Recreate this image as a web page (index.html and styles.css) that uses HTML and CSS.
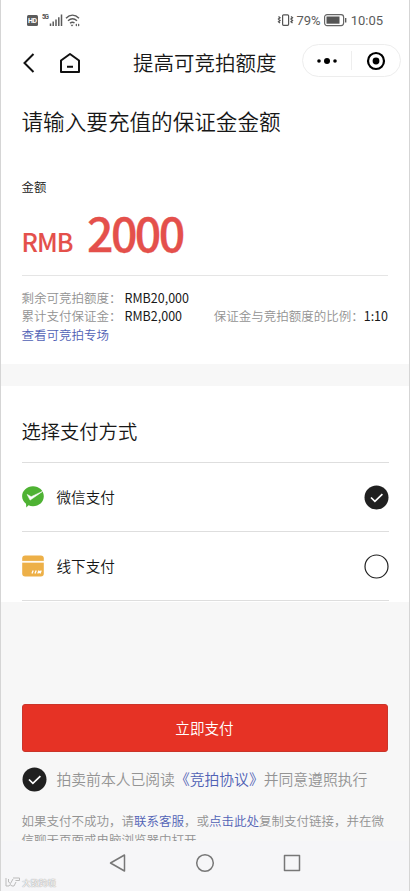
FILE: index.html
```html
<!DOCTYPE html>
<html lang="zh-CN">
<head>
<meta charset="utf-8">
<title>提高可竞拍额度</title>
<link rel="stylesheet" href="styles.css">
</head>
<body>
<div class="phone">
  <header class="status">
    <svg class="status-left" width="56" height="20" viewBox="0 0 56 20">
      <rect x="1" y="5" width="11" height="11" rx="1.5" fill="#5b5b5b"/>
      <text x="2" y="13.2" class="hd" textLength="9">HD</text>
      <text x="16" y="8.8" class="fiveg" textLength="7">5G</text>
      <path d="M24.500 16v-2.500M27.200 16v-4.500M30 16v-6.500M32.800 16V7.200M35.500 16V4.500" stroke="#5b5b5b" stroke-width="1.500"/>
      <g fill="none" stroke="#5b5b5b" stroke-width="1.400"><path d="M40 8.200c4-4 9-4 13 0M42 10.800c3-2.700 6-2.700 9 0M44 13.300c1.700-1.500 3-1.500 4.500-.3"/></g>
      <path d="M44.500 14.800h3l-1.500 1.700zM51 13.500v3l-1.800-1.500zM52 13.500v3l1.800-1.500z" fill="#5b5b5b"/>
    </svg>
    <div class="status-right">
      <svg width="17" height="14" viewBox="0 0 17 14" fill="none" stroke="#555"><rect x="5.600" y="1.800" width="6" height="10.500" rx="1" stroke-width="1.200"/><path d="M1.500 3.500l1.500 1.300-1.500 1.300L3 7.400 1.500 8.700 3 10M14 3.500l1.500 1.300L14 6.100l1.500 1.300L14 8.700l1.500 1.300" stroke-width="1.300"/></svg>
      <span class="percent">79%</span>
      <svg width="25" height="14" viewBox="0 0 25 14"><rect x="1.600" y="1.600" width="19" height="11" rx="2.500" fill="none" stroke="#666" stroke-width="1.200"/><rect x="3.500" y="3.500" width="13" height="7.200" fill="#555"/><path d="M22.700 5v4.500" stroke="#555" stroke-width="1.300"/></svg>
      <span class="clock">10:05</span>
    </div>
  </header>
  <nav class="navbar">
    <svg class="back" width="14" height="22" viewBox="0 0 14 22"><path d="M11.500 2L2.500 11l9 9" fill="none" stroke="#111" stroke-width="2"/></svg>
    <svg class="home" width="22" height="22" viewBox="0 0 22 22"><path d="M2 8.500L11 2l9 6.500V20H2z M8 14.800h6" fill="none" stroke="#111" stroke-width="2" stroke-linejoin="round"/></svg>
    <h1>提高可竞拍额度</h1>
    <div class="capsule">
      <svg width="20" height="8" viewBox="0 0 20 8"><circle cx="2" cy="4" r="1.800"/><circle cx="10" cy="4" r="3"/><circle cx="18" cy="4" r="1.800"/></svg>
      <i></i>
      <svg width="20" height="20" viewBox="0 0 20 20"><circle cx="10" cy="10" r="8" fill="none" stroke="#000" stroke-width="2.200"/><circle cx="10" cy="10" r="3.400"/></svg>
    </div>
  </nav>
  <section class="deposit">
    <h2>请输入要充值的保证金金额</h2>
    <p class="label">金额</p>
    <div class="amount"><span class="currency">RMB</span><span class="number">2000</span></div>
    <div class="details">
      <div><span class="term">剩余可竞拍额度：</span><b>RMB20,000</b></div>
      <div class="pair"><span><span class="term">累计支付保证金：</span><b>RMB2,000</b></span><span>保证金与竞拍额度的比例：<b>1:10</b></span></div>
      <a>查看可竞拍专场</a>
    </div>
  </section>
  <section class="methods">
    <h3>选择支付方式</h3>
    <div class="method">
      <svg width="22" height="22" viewBox="0 0 22 22"><path d="M11 .2c6 0 10.800 4.300 10.800 10S17 20.200 11 20.200c-1.600 0-3.200-.3-4.500-.9L4.300 21.400 4 17.800C1.700 16 .1 13.400.1 10.300.1 4.600 5 .2 11 .2z" fill="#4eb233"/><path d="M5.200 8.500l2.900 5.600L20.500 5.400 9.200 10.700z" fill="#fff" stroke="#fff" stroke-width=".6" stroke-linejoin="round"/></svg>
      <span>微信支付</span>
      <svg class="check" width="25" height="25" viewBox="0 0 25 25"><circle cx="12.500" cy="12.500" r="12" fill="#202020"/><path d="M7 12.500l3.900 3.900 7.500-7.300" fill="none" stroke="#fff" stroke-width="1.700"/></svg>
    </div>
    <div class="method">
      <svg width="22" height="22" viewBox="0 0 22 22"><rect x=".2" y=".5" width="21.600" height="21" rx="3" fill="#edb048"/><path d="M0 6.800h22" stroke="#fffaf0" stroke-width="1.800"/><path d="M10 18.500l1.200-3M13 18.500l1.200-3M15.800 18.500l1.200-3M18 18.500l1.200-3" stroke="#fff" stroke-width="1.300"/><path d="M16 17h3" stroke="#fff" stroke-width="2"/></svg>
      <span>线下支付</span>
      <svg class="check" width="25" height="25" viewBox="0 0 25 25"><circle cx="12.500" cy="12.500" r="11.500" fill="none" stroke="#222" stroke-width="1.200"/></svg>
    </div>
  </section>
  <section class="checkout">
    <button>立即支付</button>
    <div class="agreement">
      <svg width="25" height="25" viewBox="0 0 25 25"><circle cx="12.500" cy="12.500" r="12" fill="#202020"/><path d="M7 12.500l3.900 3.900 7.500-7.300" fill="none" stroke="#fff" stroke-width="1.700"/></svg>
      <span>拍卖前本人已阅读<a>《竞拍协议》</a>并同意遵照执行</span>
    </div>
    <p class="help">如果支付不成功，请<a>联系客服</a>，或<a>点击此处</a>复制支付链接，并在微信聊天页面或电脑浏览器中打开。</p>
  </section>
  <footer class="system">
    <svg width="20" height="20" viewBox="0 0 20 20"><path d="M16.500 2v16L2.500 10z"/></svg>
    <svg width="20" height="20" viewBox="0 0 20 20"><circle cx="10" cy="10" r="8.300"/></svg>
    <svg width="20" height="20" viewBox="0 0 20 20"><rect x="2.500" y="2.500" width="15" height="15"/></svg>
    <div class="watermark"><svg width="16" height="12" viewBox="0 0 16 12"><path d="M1 2v8h3l1-1.500L7 10h2l2-4M3.500 3v3l2 1.500L8 3M8 2h6.500v2.500h-4"/></svg><span>大数跨境</span></div>
  </footer>
</div>
</body>
</html>
```
FILE: styles.css
```css
* { box-sizing: border-box; }
body { margin: 0; font-family: "Noto Sans CJK SC", sans-serif; font-weight: 350; color: #171717; }
h1, h2, h3, p { margin: 0; font-weight: 350; }
svg { display: block; flex: none; }
a { color: #5061b5; }
.phone { width: 410px; height: 891px; display: flex; flex-direction: column; overflow: hidden; background: #f7f7f7; border: solid #d5d5d5; border-width: 0 1px; }
.status { height: 40px; flex: none; display: flex; justify-content: space-between; align-items: center; padding: 0 26px 0 25px; background: #fff; }
.hd { font: bold 7px Roboto, sans-serif; fill: #fff; }
.fiveg { font: bold 6.500px Roboto, sans-serif; fill: #555; }
.status-right { display: flex; align-items: center; color: #5b5b5b; font: 13px Roboto, sans-serif; }
.percent { margin: 0 2px 0 2px; }
.clock { margin-left: 3px; }
.navbar { height: 45px; flex: none; display: flex; align-items: center; padding: 2px 8px 1px 21px; background: #fff; }
.home { margin-left: 23px; }
.navbar h1 { margin: -3px 0 0 52px; font-size: 20.500px; line-height: 30px; white-space: nowrap; }
.capsule { width: 99px; height: 33px; margin: -5px 0 0 auto; display: flex; align-items: center; justify-content: space-between; padding: 0 14px; border: 1px solid #ededed; border-radius: 17px; }
.capsule i { width: 1px; height: 19px; background: #eee; }
.deposit { height: 279px; flex: none; padding: 20px 21px 0 20.500px; background: #fff; }
.deposit h2 { font-size: 21.600px; line-height: 32px; }
.label { margin-top: 41px; font-size: 12.400px; line-height: 18px; }
.amount { height: 80px; display: flex; align-items: baseline; border-bottom: 1px solid #e5e5e5; color: #e4504b; font-weight: 500; line-height: 71px; }
.currency { width: 65.500px; font-size: 25px; letter-spacing: -1px; -webkit-text-stroke: .1px; }
.number { font-size: 46.500px; letter-spacing: -2.600px; -webkit-text-stroke: .3px; }
.details { padding-top: 13px; font-size: 12.500px; line-height: 18.300px; color: #929292; white-space: nowrap; }
.details b { color: #191919; font-weight: 400; }
.term { display: inline-block; width: 103px; }
.pair { display: flex; justify-content: space-between; }
.methods { height: 216px; flex: none; margin-top: 22px; padding: 0 20px 0 20.500px; background: #fff; }
.methods h3 { height: 76px; padding-top: 30px; font-size: 19.300px; line-height: 30px; }
.method { height: 69px; display: flex; align-items: center; border-top: 1px solid #dedede; font-size: 14.600px; }
.method:last-child { height: 70px; border-bottom: 1px solid #dedede; }
.method span { margin-left: 13px; padding-bottom: 2px; }
.check { margin-left: auto; }
.checkout { height: 239px; flex: none; padding: 102px 22px 0 20.500px; overflow: hidden; }
button { display: block; width: 366px; height: 48px; padding: 0 0 2px; border: 1px solid #ca352a; border-radius: 3px; background: #e63225; color: #fff; font: 350 14.600px "Noto Sans CJK SC", sans-serif; }
.agreement { display: flex; align-items: center; height: 25px; margin-top: 15px; font-size: 14.800px; color: #949494; white-space: nowrap; }
.agreement span { margin-left: 10px; padding-bottom: 2px; }
.help { width: 368px; margin-top: 20px; font-size: 12.500px; line-height: 18.500px; color: #929292; }
.system { position: relative; flex: 1; display: flex; justify-content: center; gap: 67px; padding-top: 12px; background: #f6f6f8; }
.system > svg { fill: none; stroke: #777; stroke-width: 1.500; stroke-linejoin: round; }
.watermark { position: absolute; left: 4px; bottom: 3px; display: flex; align-items: center; gap: 1px; height: 12px; font-size: 8.500px; line-height: 12px; color: #fff; text-shadow: 0 0 1px #999, 0 0 1px #999; }
.watermark svg { fill: none; stroke: #bbb; stroke-width: 1; }
```
